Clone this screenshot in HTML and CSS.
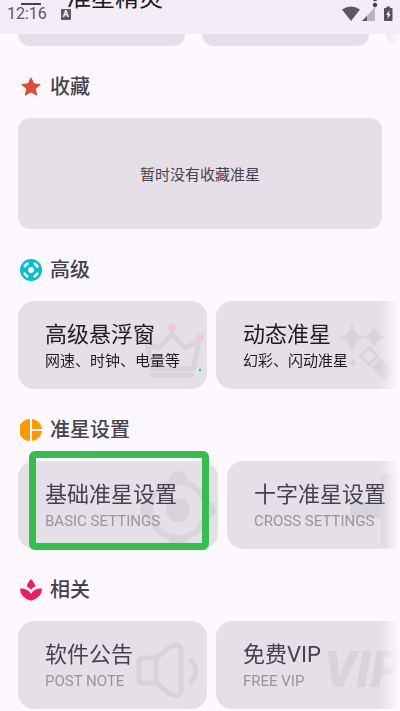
FILE: index.html
```html
<!DOCTYPE html>
<html lang="zh-CN">
<head>
<meta charset="utf-8">
<meta name="viewport" content="width=device-width, initial-scale=1">
<title>准星精灵</title>
<link rel="stylesheet" href="styles.css">
</head>
<body>
<header class="top">
  <div class="appbar">
    <button class="icon-button" aria-label="菜单"><svg width="20" height="24" viewBox="0 0 20 24"><path d="M0 7h20M0 12.500h20M0 18h20" stroke="#45424b" stroke-width="2"/></svg></button>
    <h1 class="app-title">准星精灵</h1>
    <button class="icon-button" aria-label="更多"><svg width="6" height="24" viewBox="0 0 6 24" fill="#45424b"><circle cx="3" cy="7" r="2.200"/><circle cx="3" cy="13" r="2.200"/><circle cx="3" cy="19" r="2.200"/></svg></button>
  </div>
  <div class="status">
    <span class="clock">12:16</span>
    <span class="badge">A</span>
    <svg class="signals" width="52" height="16" viewBox="0 0 52 16">
      <path d="M0 3.500Q9 -2.500 18 3.500L9 15Z" fill="#5c5961"/>
      <path d="M33 1V15H20Z" fill="#bab6be"/><path d="M25 10V15H20Z" fill="#5c5961"/>
      <path d="M44.500 0.500h3.500v1.500h1.500q1 0 1 1v11q0 1-1 1h-6.500q-1 0-1-1v-11q0-1 1-1h1.500z" fill="#55525a"/>
      <path d="M47.500 4l-3.300 5h1.800l-.5 4 3.200-5h-1.800z" fill="#fff"/>
    </svg>
  </div>
</header>

<main class="page">
  <div class="row row-passed">
    <div class="card card-small"></div>
    <div class="card card-small"></div>
    <div class="card card-small"></div>
  </div>

  <section>
    <h2 class="heading"><svg width="22" height="22" viewBox="0 0 22 22"><path d="M11 1.800l2.700 6 6.500.7-4.900 4.300 1.400 6.400-5.700-3.300-5.700 3.300 1.400-6.400L1.800 8.500l6.500-.7z" fill="#e04a3c" stroke="#e04a3c" stroke-linejoin="round"/></svg>收藏</h2>
    <p class="empty">暂时没有收藏准星</p>
  </section>

  <section>
    <h2 class="heading"><svg width="22" height="22" viewBox="0 0 22 22"><circle cx="11" cy="11" r="11" fill="#08bcd3"/><circle cx="11" cy="11" r="3" fill="#fdf7ff"/><circle cx="11" cy="11" r="7.300" fill="none" stroke="#fdf7ff" stroke-width="2.600" stroke-linecap="round" stroke-dasharray="3.800 7.667" stroke-dashoffset="-3.834"/></svg>高级</h2>
    <div class="row">
      <button class="card">
        <svg class="mark" width="189" height="88" viewBox="0 0 189 88">
          <path d="M129 43l6 25h40l6-28-14 7-13-14-13 14z" fill="none" stroke="#d9d4db" stroke-width="5" stroke-linejoin="round"/>
          <path d="M134 74h40" stroke="#d9d4db" stroke-width="5" stroke-linecap="round"/>
          <g fill="#ebccd3"><circle cx="126" cy="35" r="4"/><circle cx="154" cy="27" r="4"/><circle cx="182" cy="36" r="4"/></g>
          <circle cx="182" cy="69" r="1.200" fill="#16e52b"/>
        </svg>
        <span class="name strong">高级悬浮窗</span>
        <span class="note strong">网速、时钟、电量等</span>
      </button>
      <button class="card">
        <svg class="mark" width="189" height="88" viewBox="0 0 189 88" fill="#d7d3da">
          <path d="M136 22q2 13 13 15q-11 2-13 16q-2-14-13-16q11-2 13-15zM158 25q2 9 11 11q-9 2-11 11q-2-9-11-11q9-2 11-11zM137 57q1 4 5 5q-4 1-5 5q-1-4-5-5q4-1 5-5z"/>
          <path d="M153 46.500l8.500 8.500-8.500 8.500-8.500-8.500z" fill="none" stroke="#d7d3da" stroke-width="3" stroke-linejoin="round"/>
          <path d="M165 57l11 11q3 3 0 6l-3 3q-3 3-6 0l-11-11z"/>
        </svg>
        <span class="name strong">动态准星</span>
        <span class="note strong">幻彩、闪动准星</span>
      </button>
    </div>
  </section>

  <section>
    <h2 class="heading"><svg width="22" height="22" viewBox="0 0 22 22" fill="#fe9803"><path d="M10 0v22A11 11 0 0 1 10 0zM12 0A11 11 0 0 1 22 10H12zM12 12h10A11 11 0 0 1 12 22z"/></svg>准星设置</h2>
    <div class="spotlight">
      <div class="row">
        <button class="card card-wide">
          <svg class="mark" width="200" height="88" viewBox="0 0 200 88" fill="#d7d3da">
            <circle cx="160" cy="19" r="9"/><circle cx="131" cy="49" r="9"/><circle cx="189" cy="49" r="9"/><circle cx="160" cy="79" r="9"/>
            <circle cx="160" cy="49" r="28" fill="#e5e0e7" stroke="#d9d5dc" stroke-width="6"/><circle cx="160" cy="49" r="12"/>
          </svg>
          <span class="name">基础准星设置</span>
          <span class="note latin">BASIC SETTINGS</span>
        </button>
        <button class="card card-wide">
          <svg class="mark" width="200" height="88" viewBox="0 0 200 88" fill="#d7d3da"><rect x="123" y="41" width="76" height="16" rx="6"/><rect x="154" y="12" width="15" height="75" rx="6"/></svg>
          <span class="name">十字准星设置</span>
          <span class="note latin">CROSS SETTINGS</span>
        </button>
      </div>
      <div class="outline"></div>
    </div>
  </section>

  <section>
    <h2 class="heading"><svg width="22" height="22" viewBox="0 0 22 22" fill="#ec1e62"><path d="M11 0q4 4 4.200 7.500Q13 8.500 11 10.800Q9 8.500 6.800 7.500Q7 4 11 0z"/><path d="M0 9.500q8-.5 11 5.500q3-6 11-5.500q0 9-11 12.300Q0 18.500 0 9.500z"/></svg>相关</h2>
    <div class="row">
      <button class="card">
        <svg class="mark" width="189" height="88" viewBox="0 0 189 88" fill="none" stroke="#d7d3da" stroke-width="5" stroke-linejoin="round" stroke-linecap="round">
          <path d="M138 37h-13q-4 0-4 4v17q0 4 4 4h13zM138 37l14-11q11-5 11 3v40q0 9-11 4l-14-11M173 40q10 9 0 20"/>
        </svg>
        <span class="name">软件公告</span>
        <span class="note latin">POST NOTE</span>
      </button>
      <button class="card">
        <span class="mark word" aria-hidden="true">VIP</span>
        <span class="name">免费VIP</span>
        <span class="note latin">FREE VIP</span>
      </button>
    </div>
  </section>
</main>
</body>
</html>
```
FILE: styles.css
```css
* {
  box-sizing: border-box;
}

body {
  margin: 0;
  min-height: 100vh;
  overflow: hidden;
  background: #fdf7ff;
  color: #45424b;
  font-family: Roboto, "Noto Sans CJK SC", sans-serif;
}

button {
  margin: 0;
  border: 0;
  padding: 0;
  background: none;
  color: inherit;
  font: inherit;
}

svg {
  display: block;
  flex: none;
}

.top {
  position: relative;
  z-index: 1;
  height: 34px;
  overflow: hidden;
  background: #f2edf7;
}

.appbar {
  display: flex;
  align-items: center;
  height: 24px;
  margin-top: -14px;
  padding: 0 22px 0 21px;
}

.app-title {
  flex: 1;
  margin: 0 0 0 26px;
  color: #1d1b20;
  font-size: 24px;
  font-weight: 400;
  line-height: 24px;
}

.status {
  position: absolute;
  inset: 5px 6px auto 7px;
  display: flex;
  align-items: center;
  height: 18px;
  color: #5c5961;
}

.clock {
  font-size: 16px;
  line-height: 18px;
}

.badge {
  width: 10px;
  margin-left: 14px;
  border-radius: 1px;
  background: #5c5961;
  color: #fff;
  font-size: 9px;
  font-weight: 700;
  line-height: 11px;
  text-align: center;
}

.signals {
  margin-left: auto;
}

.row {
  display: flex;
  gap: 9px;
  padding-left: 18px;
  overflow: hidden;
  -webkit-mask-image: linear-gradient(to left, transparent 2px, #000 20px);
  mask-image: linear-gradient(to left, transparent 2px, #000 20px);
}

.row-passed {
  gap: 17px;
  margin-top: -76px;
}

.card {
  position: relative;
  display: flex;
  flex: none;
  flex-direction: column;
  width: 189px;
  height: 88px;
  padding: 20px 0 0 27px;
  border-radius: 16px;
  overflow: hidden;
  background: #e5e0e7;
  text-align: left;
}

.card-small {
  width: 167px;
  border-radius: 12px;
}

.card-wide {
  width: 200px;
}

.mark {
  position: absolute;
  inset: 0 auto auto 0;
}

.word {
  left: 108px;
  top: 24px;
  color: #d7d3da;
  font: italic 900 50px/50px Roboto, sans-serif;
}

.name,
.note {
  position: relative;
  white-space: nowrap;
}

.name {
  font-size: 22px;
  line-height: 28px;
}

.note {
  font-size: 15px;
  line-height: 24px;
}

.latin {
  color: #98949c;
}

.strong {
  color: #1d1b20;
}

.heading {
  display: flex;
  align-items: center;
  gap: 8px;
  height: 72px;
  margin: 0;
  padding: 9px 20px 0;
  font-size: 20px;
  font-weight: 500;
  line-height: 24px;
}

.empty {
  display: flex;
  align-items: center;
  justify-content: center;
  height: 111px;
  margin: 0 18px;
  border-radius: 12px;
  background: #e5e0e7;
  font-size: 15px;
}

.spotlight {
  position: relative;
}

.outline {
  position: absolute;
  top: -10px;
  left: 29px;
  width: 180px;
  height: 99px;
  border: 7px solid #35be4e;
  border-radius: 6px;
}
```
